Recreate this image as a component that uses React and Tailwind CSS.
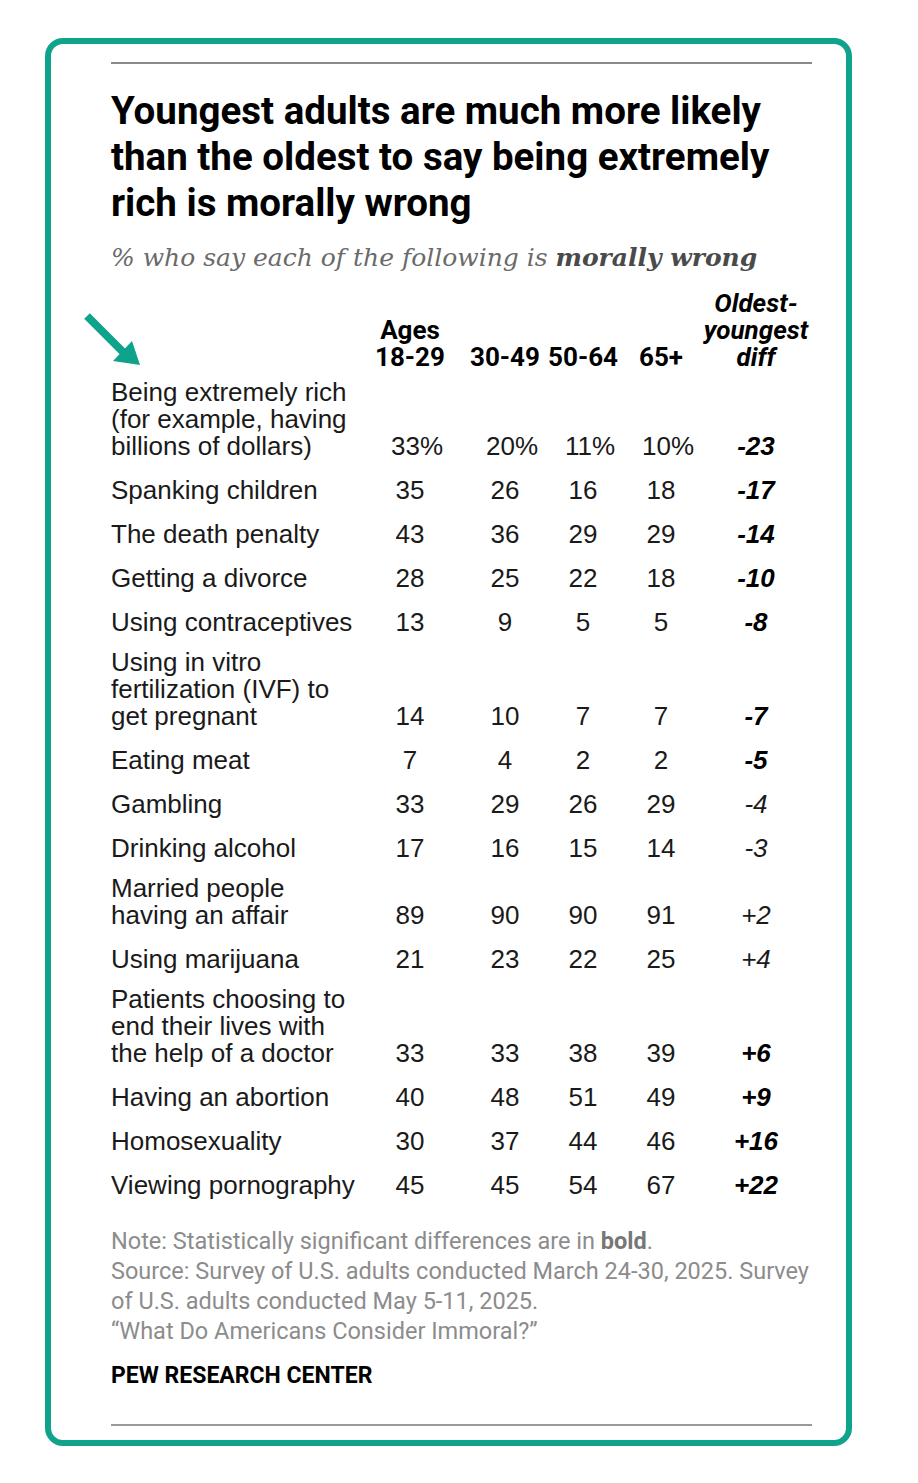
import React from 'react';

const narrow = "font-['Liberation_Sans_Narrow',Roboto,sans-serif]";
const body = "font-['Liberation_Sans',Arial,sans-serif]";

const rows = [
  { label: ['Being extremely rich', '(for example, having', 'billions of dollars)'], v: ['33%', '20%', '11%', '10%'], diff: '-23', bold: true },
  { label: ['Spanking children'], v: ['35', '26', '16', '18'], diff: '-17', bold: true },
  { label: ['The death penalty'], v: ['43', '36', '29', '29'], diff: '-14', bold: true },
  { label: ['Getting a divorce'], v: ['28', '25', '22', '18'], diff: '-10', bold: true },
  { label: ['Using contraceptives'], v: ['13', '9', '5', '5'], diff: '-8', bold: true },
  { label: ['Using in vitro', 'fertilization (IVF) to', 'get pregnant'], v: ['14', '10', '7', '7'], diff: '-7', bold: true },
  { label: ['Eating meat'], v: ['7', '4', '2', '2'], diff: '-5', bold: true },
  { label: ['Gambling'], v: ['33', '29', '26', '29'], diff: '-4', bold: false },
  { label: ['Drinking alcohol'], v: ['17', '16', '15', '14'], diff: '-3', bold: false },
  { label: ['Married people', 'having an affair'], v: ['89', '90', '90', '91'], diff: '+2', bold: false },
  { label: ['Using marijuana'], v: ['21', '23', '22', '25'], diff: '+4', bold: false },
  { label: ['Patients choosing to', 'end their lives with', 'the help of a doctor'], v: ['33', '33', '38', '39'], diff: '+6', bold: true },
  { label: ['Having an abortion'], v: ['40', '48', '51', '49'], diff: '+9', bold: true },
  { label: ['Homosexuality'], v: ['30', '37', '44', '46'], diff: '+16', bold: true },
  { label: ['Viewing pornography'], v: ['45', '45', '54', '67'], diff: '+22', bold: true },
];

const cols = 'grid grid-cols-[251px_96px_94px_62px_94px_96px]';

const App = () => {
  return (
    <div className="min-h-screen bg-white pt-[38px] pl-[45px]">
      <div className="relative flex h-[1408px] w-[807px] flex-col rounded-[18px] border-[6px] border-[#0fa38c] pl-[60px] pr-[34px] pt-[18px]">
        {/* arrow pointing at the first row */}
        <svg className="absolute left-[29px] top-[264px]" width="66" height="64" viewBox="0 0 66 64">
          <line x1="7" y1="8" x2="44" y2="45" stroke="#0fa38c" strokeWidth="8" />
          <polygon points="60,57 33,53 52,33" fill="#0fa38c" />
        </svg>

        <div className="h-[2px] bg-[#8a8a8a]" />

        <h1 className={`${narrow} mt-[24px] text-[38.5px] font-bold leading-[46px] text-black`}>
          <span className="block">Youngest adults are much more likely</span>
          <span className="block">than the oldest to say being extremely</span>
          <span className="block">rich is morally wrong</span>
        </h1>

        <p className="mt-[17px] font-['DejaVu_Serif',Georgia,serif] text-[25px] italic leading-[30px] text-[#6a6a6a]">
          % who say each of the following is <span className="font-bold text-[#4a4a4a]">morally wrong</span>
        </p>

        {/* header */}
        <div className={`${cols} ${narrow} mt-[17px] items-end text-[26px] font-bold leading-[27px] text-black`}>
          <div />
          <div className="flex flex-col items-center whitespace-nowrap">
            <span>Ages</span>
            <span>18-29</span>
          </div>
          <div className="flex justify-center whitespace-nowrap">30-49</div>
          <div className="flex justify-center whitespace-nowrap">50-64</div>
          <div className="flex justify-center whitespace-nowrap">65+</div>
          <div className="flex flex-col items-center whitespace-nowrap italic">
            <span>Oldest-</span>
            <span>youngest</span>
            <span>diff</span>
          </div>
        </div>

        {/* rows */}
        <div className={`${body} text-[26px] leading-[27px] text-[#1a1a1a]`}>
          {rows.map((r, idx) => (
            <div
              key={r.label[0]}
              className={`${cols} items-end pb-[9px] ${r.label.length > 1 && idx > 0 ? 'pt-[4px]' : 'pt-[8px]'}`}
            >
              <div className="flex flex-col whitespace-nowrap">
                {r.label.map((l) => (
                  <span key={l}>{l}</span>
                ))}
              </div>
              {r.v.map((n, i) => (
                <div key={i} className={`flex justify-center whitespace-nowrap ${n.endsWith('%') ? 'pl-[14px]' : ''}`}>
                  {n}
                </div>
              ))}
              <div className={`flex justify-center italic ${r.bold ? 'font-bold text-black' : ''}`}>{r.diff}</div>
            </div>
          ))}
        </div>

        {/* notes */}
        <div className="mt-[18px] font-['Roboto',sans-serif] text-[23.5px] leading-[30px] text-[#8c8c8c]">
          <p>Note: Statistically significant differences are in <span className="font-bold text-[#777]">bold</span>.</p>
          <p>Source: Survey of U.S. adults conducted March 24-30, 2025. Survey</p>
          <p>of U.S. adults conducted May 5-11, 2025.</p>
          <p>“What Do Americans Consider Immoral?”</p>
        </div>

        <div className={`${narrow} mt-[17px] text-[23px] font-bold leading-[26px] text-black`}>PEW RESEARCH CENTER</div>

        <div className="mt-[35px] h-[2px] bg-[#9a9a9a]" />
      </div>
    </div>
  );
};

export default App;
